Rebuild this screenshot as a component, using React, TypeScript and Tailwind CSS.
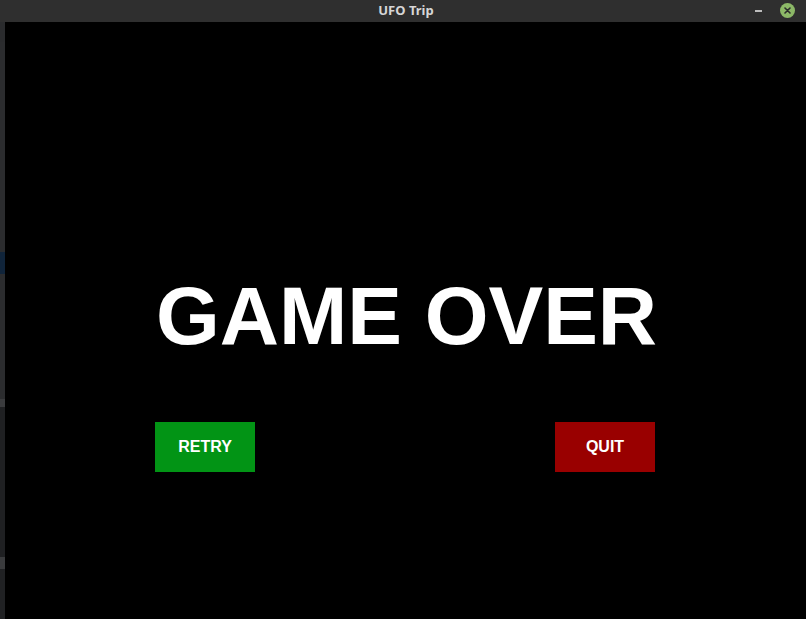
export default function App() {
  return (
    <div className="w-[806px] h-[619px] bg-black flex flex-col overflow-hidden" style={{ fontFamily: '"Liberation Sans", Arial, sans-serif' }}>
      {/* window title bar */}
      <div className="h-[22px] bg-[#2f2f2f] flex items-center relative shrink-0">
        <div className="flex-1 text-center text-[13px] font-bold text-[#d6d6d6] pl-[6px]" style={{ fontFamily: '"Noto Sans", "DejaVu Sans", sans-serif' }}>
          UFO Trip
        </div>
        <div className="absolute right-[44px] top-[10px] w-[7px] h-[2px] bg-[#bdbdbd]" />
        <div className="absolute right-[11px] top-[3px] w-[15px] h-[15px] rounded-full bg-[#8cb867] flex items-center justify-center">
          <svg width="7" height="7" viewBox="0 0 7 7">
            <path d="M1 1L6 6M6 1L1 6" stroke="#2b2b2b" strokeWidth="1.6" strokeLinecap="round" />
          </svg>
        </div>
      </div>
      <div className="flex flex-1">
        {/* edge of the window behind */}
        <div className="w-[5px] flex flex-col bg-[#2b2c2e]">
          <div className="h-[20px] bg-[#2a2b2d]" />
          <div className="h-[210px]" />
          <div className="h-[22px] bg-[#10243a]" />
          <div className="h-[125px]" />
          <div className="h-[8px] bg-[#3a3b3d]" />
          <div className="h-[150px] bg-[#1f2022]" />
          <div className="h-[12px] bg-[#3a3b3d]" />
          <div className="flex-1 bg-[#202123]" />
        </div>
        {/* game screen */}
        <div className="flex-1 bg-black flex flex-col pt-[253px]">
          <h1 className="text-center text-white font-bold text-[82px] leading-none pl-[2px]">GAME OVER</h1>
          <div className="flex justify-between pl-[150px] pr-[151px] mt-[65px]">
            <button className="w-[100px] h-[50px] bg-[#029415] text-white font-bold text-[16px]">RETRY</button>
            <button className="w-[100px] h-[50px] bg-[#990000] text-white font-bold text-[16px]">QUIT</button>
          </div>
        </div>
      </div>
    </div>
  );
}
